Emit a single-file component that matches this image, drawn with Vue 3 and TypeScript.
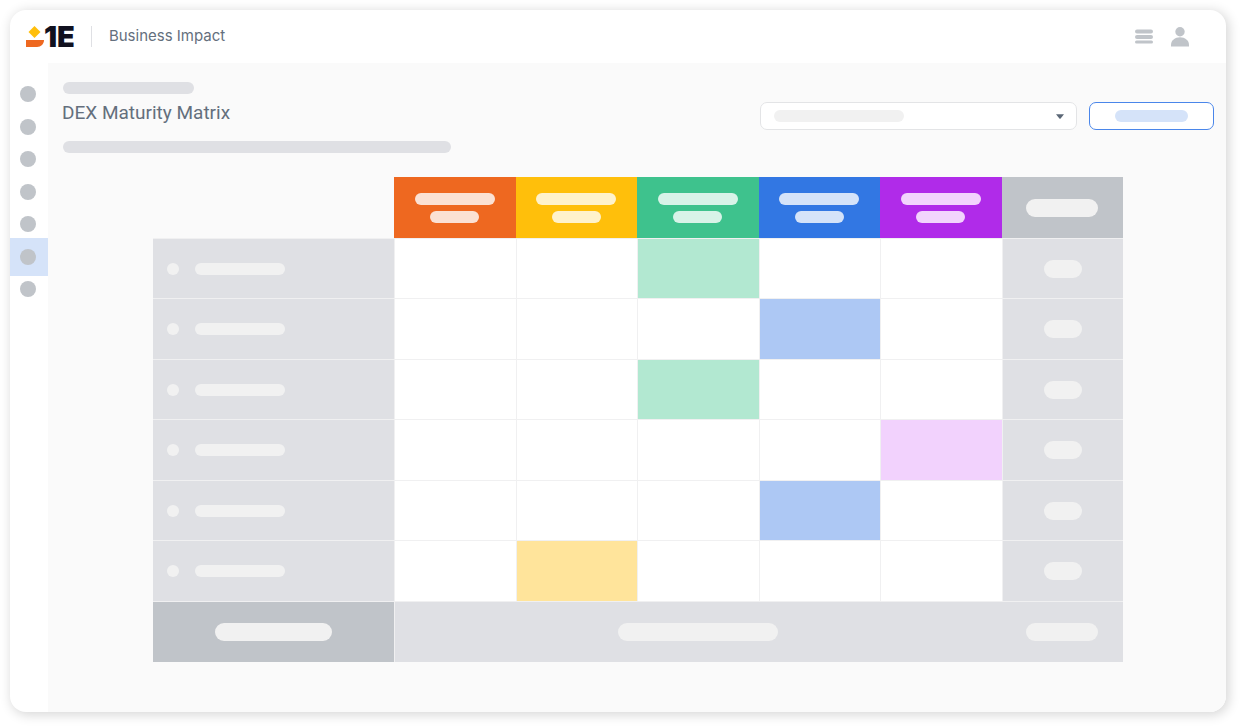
<script setup lang="ts">
interface Level {
  id: string
}

interface Row {
  id: number
  level: string
}

const levels: Level[] = [
  { id: 'orange' },
  { id: 'yellow' },
  { id: 'green' },
  { id: 'blue' },
  { id: 'purple' },
]

const rows: Row[] = [
  { id: 1, level: 'green' },
  { id: 2, level: 'blue' },
  { id: 3, level: 'green' },
  { id: 4, level: 'purple' },
  { id: 5, level: 'blue' },
  { id: 6, level: 'yellow' },
]

const navItems = 7
const activeItem = 6
</script>

<template>
  <div class="window">
    <header class="topbar">
      <div class="logo">
        <svg class="mark" width="18" height="21" viewBox="0 0 18 21" aria-hidden="true">
          <path d="M8.5 0 L14.5 6 L8.5 12 L2.5 6 Z" fill="#ffbf0b" />
          <path d="M0 14 H18 C18 18 15 21 11 21 H0 Z" fill="#ee6820" />
        </svg>
        <span class="wordmark">1E</span>
      </div>
      <span class="divider"></span>
      <span class="product">Business Impact</span>
      <div class="tools">
        <button class="icon-button" type="button" aria-label="Menu">
          <svg width="18" height="16" viewBox="0 0 18 16">
            <rect x="0" y="0.5" width="18" height="4" rx="2" />
            <rect x="0" y="6" width="18" height="4" rx="2" />
            <rect x="0" y="11.5" width="18" height="3" rx="1.5" />
          </svg>
        </button>
        <button class="icon-button" type="button" aria-label="Account">
          <svg width="18" height="20" viewBox="0 0 18 20">
            <circle cx="9" cy="4.7" r="4.7" />
            <path d="M0 19.5 V18 C0 13.5 4 10.3 9 10.3 S18 13.5 18 18 V19.5 Z" />
          </svg>
        </button>
      </div>
    </header>

    <div class="body">
      <nav class="sidebar" aria-label="Main">
        <div class="nav-list">
          <button
            v-for="n in navItems"
            :key="n"
            type="button"
            class="nav-item"
            :class="{ active: n === activeItem }"
            :aria-label="`Section ${n}`"
          >
            <span class="nav-dot"></span>
          </button>
        </div>
      </nav>

      <main class="content">
        <div class="page-head">
          <div class="heading">
            <span class="bar crumb"></span>
            <h1>DEX Maturity Matrix</h1>
            <span class="bar subtitle"></span>
          </div>
          <div class="actions">
            <div class="select-wrap">
              <select aria-label="Filter">
                <option></option>
              </select>
              <span class="bar select-value"></span>
              <svg class="caret" width="8" height="5" viewBox="0 0 8 5" aria-hidden="true">
                <path d="M0 0.2 H8 L4.6 4.4 Q4 5 3.4 4.4 Z" fill="#5b6776" />
              </svg>
            </div>
            <button class="action" type="button" aria-label="Apply">
              <span class="bar action-label"></span>
            </button>
          </div>
        </div>

        <table class="matrix">
          <colgroup>
            <col class="name-col" />
            <col v-for="level in levels" :key="level.id" />
            <col />
          </colgroup>
          <thead>
            <tr>
              <td class="corner"></td>
              <th v-for="level in levels" :key="level.id" scope="col" :class="['level', level.id]">
                <span class="bar long"></span>
                <span class="bar short"></span>
              </th>
              <th scope="col" class="score-head"><span class="bar pill wide"></span></th>
            </tr>
          </thead>
          <tbody>
            <tr v-for="row in rows" :key="row.id">
              <th scope="row" class="name">
                <div class="name-inner">
                  <span class="dot"></span>
                  <span class="bar name-bar"></span>
                </div>
              </th>
              <td
                v-for="level in levels"
                :key="level.id"
                :class="['cell', row.level === level.id ? 'on-' + level.id : '']"
              ></td>
              <td class="score"><span class="bar pill"></span></td>
            </tr>
          </tbody>
          <tfoot>
            <tr>
              <th scope="row" class="total"><span class="bar pill total-bar"></span></th>
              <td :colspan="levels.length" class="summary"><span class="bar pill summary-bar"></span></td>
              <td class="summary last"><span class="bar pill wide"></span></td>
            </tr>
          </tfoot>
        </table>
      </main>
    </div>
  </div>
</template>

<style>
body {
  margin: 0;
  background: #fff;
}
</style>

<style scoped>
* {
  box-sizing: border-box;
}

button {
  padding: 0;
  border: 0;
  background: none;
  cursor: pointer;
}

.window {
  display: flex;
  flex-direction: column;
  min-height: calc(100vh - 26px);
  margin: 10px 16px 16px 10px;
  overflow: hidden;
  border-radius: 16px;
  background: #fff;
  box-shadow: 2px 2px 12px 1px rgba(0, 0, 0, 0.16);
  font-family: Inter, "Liberation Sans", sans-serif;
  color: #646f7d;
}

.topbar {
  display: flex;
  align-items: center;
  height: 53px;
  padding: 0 37px 0 16px;
}

.logo {
  display: flex;
  align-items: center;
}

.mark {
  display: block;
}

.wordmark {
  font-size: 29px;
  line-height: 29px;
  font-weight: 900;
  color: #11111f;
}

.divider {
  width: 1px;
  height: 21px;
  margin: 0 17px 0 16px;
  background: #dfe0e4;
}

.product {
  padding-bottom: 2px;
  font-size: 15px;
  line-height: 20px;
  font-weight: 400;
}

.tools {
  display: flex;
  align-items: center;
  gap: 18px;
  margin-left: auto;
}

.icon-button svg {
  display: block;
  fill: #c0c4c9;
}

.body {
  display: flex;
  flex: 1;
}

.sidebar {
  flex: none;
  width: 38px;
  padding-top: 23px;
}

.nav-list {
  display: flex;
  flex-direction: column;
  justify-content: space-between;
  height: 211px;
}

.nav-item {
  display: flex;
  align-items: center;
  height: 16px;
  padding-left: 10px;
}

.nav-item.active {
  height: 38px;
  margin: -11px 0;
  background: #d5e3f9;
}

.nav-dot {
  width: 16px;
  height: 16px;
  border-radius: 50%;
  background: #c0c4c9;
}

.content {
  flex: 1;
  min-width: 0;
  padding: 19px 12px 49px 14px;
  background: #fafafa;
}

.bar {
  display: block;
  height: 12px;
  border-radius: 9px;
  background: #f1f1f1;
}

.page-head {
  display: flex;
  justify-content: space-between;
}

.heading {
  flex: 1;
  min-width: 0;
}

.crumb {
  width: 131px;
  margin-left: 1px;
  background: #dfe0e4;
}

h1 {
  margin: 7px 0 16px;
  font-family: Roboto, sans-serif;
  font-size: 19px;
  line-height: 24px;
  font-weight: 400;
}

.subtitle {
  width: 388px;
  max-width: 90%;
  margin-left: 1px;
  background: #dfe0e4;
}

.actions {
  display: flex;
  gap: 12px;
  margin-top: 20px;
}

.select-wrap {
  position: relative;
  width: 317px;
  height: 28px;
}

select {
  width: 100%;
  height: 100%;
  border: 1px solid #e3e4e6;
  border-radius: 7px;
  background: #fff;
  appearance: none;
}

.select-value {
  position: absolute;
  top: 8px;
  left: 14px;
  width: 130px;
  pointer-events: none;
}

.caret {
  position: absolute;
  top: 12px;
  right: 13px;
  pointer-events: none;
}

.action {
  display: flex;
  align-items: center;
  justify-content: center;
  width: 125px;
  height: 28px;
  border: 1px solid #4a86ea;
  border-radius: 7px;
  background: #fff;
}

.action-label {
  width: 73px;
  background: #d5e3f9;
}

.matrix {
  width: 100%;
  max-width: 970px;
  margin: 24px auto 0;
  border-spacing: 0;
  table-layout: fixed;
}

.name-col {
  width: 241px;
}

.matrix th,
.matrix td {
  height: 61px;
  padding: 0;
  vertical-align: middle;
}

.matrix tbody tr:nth-child(odd) > * {
  height: 60px;
}

.matrix .bar {
  margin: 0 auto;
}

.matrix .long {
  width: 80px;
}

.matrix .short {
  width: 49px;
  margin-top: 6px;
}

.pill {
  width: 38px;
  height: 18px;
}

.wide {
  width: 72px;
}

.orange { background: #ee6820; }
.yellow { background: #ffbf0b; }
.green { background: #3ec28d; }
.blue { background: #3277e3; }
.purple { background: #b02be9; }

.orange .bar { background: #fbe1d3; }
.yellow .bar { background: #fff2cb; }
.green .bar { background: #d8f3e8; }
.blue .bar { background: #d5e3f9; }
.purple .bar { background: #f2d4fd; }

.score-head,
.total {
  background: #c0c4c9;
}

.matrix tbody th,
.matrix tbody td,
.matrix tfoot th,
.matrix tfoot td {
  border-top: 1px solid #f0f0f1;
}

.name,
.score,
.summary {
  background: #dfe0e4;
}

.name-inner {
  display: flex;
  align-items: center;
  gap: 16px;
  padding-left: 14px;
}

.dot {
  width: 12px;
  height: 12px;
  border-radius: 50%;
  background: #f1f1f1;
}

.matrix .name-bar {
  width: 90px;
  margin: 0;
}

.cell {
  border-left: 1px solid #f0f0f1;
  background: #fff;
}

.on-yellow { background: #ffe49b; }
.on-green { background: #b2e8d1; }
.on-blue { background: #adc8f4; }
.on-purple { background: #f2d2fd; }

.score {
  border-left: 1px solid #f0f0f1;
}

.summary {
  border-left: 1px solid #f0f0f1;
}

.summary.last {
  border-left: 0;
}

.total-bar {
  width: 117px;
}

.summary-bar {
  width: 160px;
}
</style>
